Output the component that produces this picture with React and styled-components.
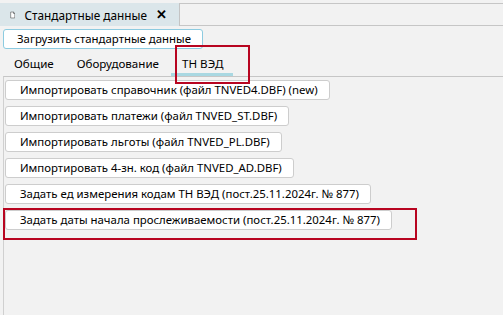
import React from "react";
import styled, { createGlobalStyle } from "styled-components";

const Global = createGlobalStyle`
  html, body { margin: 0; padding: 0; background: #f2f2f2; }
  body { font-family: "Segoe UI", "Noto Sans", "Liberation Sans", sans-serif; }
`;

const Screen = styled.div`
  width: 503px;
  height: 315px;
  background: #f2f2f2;
  display: flex;
  flex-direction: column;
  overflow: hidden;
  font-size: 11.4px;
  color: #000;
`;

const DocStrip = styled.div`
  display: flex;
  align-items: stretch;
  padding-top: 3px;
  height: 23px;
`;

const DocTab = styled.div`
  width: 180px;
  background: #dbe6ea;
  border-right: 1px solid #c4c4c4;
  display: flex;
  align-items: center;
  padding-left: 10px;
  box-sizing: border-box;
  gap: 9px;
  white-space: nowrap;
`;

const DocTitle = styled.span`
  font-size: 11.8px;
  flex: 1;
`;

const Close = styled.span`
  font-size: 13px;
  margin-right: 12px;
  line-height: 1;
  font-weight: 600;
`;

const StripFill = styled.div`
  flex: 1;
  border-top: 1px solid #c6c6c6;
  border-bottom: 1px solid #c6c6c6;
`;

const Body = styled.div`
  flex: 1;
  display: flex;
  flex-direction: column;
  padding: 3px 0 0 3px;
`;

const Button = styled.button`
  font: inherit;
  font-size: 11.4px;
  height: 20px;
  background: #fff;
  border: 1px solid ${(p) => (p.$accent ? "#8ccbe0" : "#cdcdcd")};
  border-radius: 3px;
  padding: 0 ${(p) => (p.$accent ? "11px" : "11px")} 0 ${(p) => (p.$accent ? "13px" : "14px")};
  text-align: left;
  color: #000;
  white-space: nowrap;
  line-height: 18px;
  align-self: flex-start;
`;

const TabsRow = styled.div`
  display: flex;
  height: 27px;
  padding-left: 11px;
  align-items: flex-end;
`;

const InnerTab = styled.div`
  position: relative;
  font-size: 11.6px;
  padding: 0 0 5px 0;
  margin-right: 23px;
  ${(p) =>
    p.$active &&
    `
    &::after {
      content: "";
      position: absolute;
      left: -11px;
      right: -10px;
      bottom: 0;
      height: 3px;
      background: #a9d8e2;
    }
  `}
`;

const Panel = styled.div`
  flex: 1;
  border-top: 1px solid #c6c6c6;
  border-left: 1px solid #d0d0d0;
  display: flex;
  flex-direction: column;
  gap: 6px;
  padding: 3px 0 0 1px;
`;

const Highlight = styled.div`
  position: absolute;
  border: 2px solid #b80520;
  box-sizing: border-box;
  pointer-events: none;
`;

const Layer = styled.div`
  position: relative;
`;

function PageIcon() {
  return (
    <svg width="12" height="14" viewBox="0 0 12 14">
      <path d="M1.5 0.5 H7.5 L10.5 3.5 V13.5 H1.5 Z M7.5 0.5 V3.5 H10.5" fill="#fff" stroke="#222" strokeWidth="1" />
    </svg>
  );
}

const buttons = [
  "Импортировать справочник (файл TNVED4.DBF) (new)",
  "Импортировать платежи (файл TNVED_ST.DBF)",
  "Импортировать льготы (файл TNVED_PL.DBF)",
  "Импортировать 4-зн. код (файл TNVED_AD.DBF)",
  "Задать ед измерения кодам ТН ВЭД (пост.25.11.2024г. № 877)",
  "Задать даты начала прослеживаемости (пост.25.11.2024г. № 877)",
];

export default function App() {
  return (
    <Layer>
      <Global />
      <Screen>
        <DocStrip>
          <DocTab>
            <PageIcon />
            <DocTitle>Стандартные данные</DocTitle>
            <Close>✕</Close>
          </DocTab>
          <StripFill />
        </DocStrip>
        <Body>
          <Button $accent>Загрузить стандартные данные</Button>
          <TabsRow>
            <InnerTab>Общие</InnerTab>
            <InnerTab>Оборудование</InnerTab>
            <InnerTab $active>ТН ВЭД</InnerTab>
          </TabsRow>
          <Panel>
            {buttons.map((b) => (
              <Button key={b}>{b}</Button>
            ))}
          </Panel>
        </Body>
      </Screen>
      <Highlight style={{ left: 175, top: 45, width: 75, height: 39 }} />
      <Highlight style={{ left: 3, top: 208, width: 414, height: 32 }} />
    </Layer>
  );
}
